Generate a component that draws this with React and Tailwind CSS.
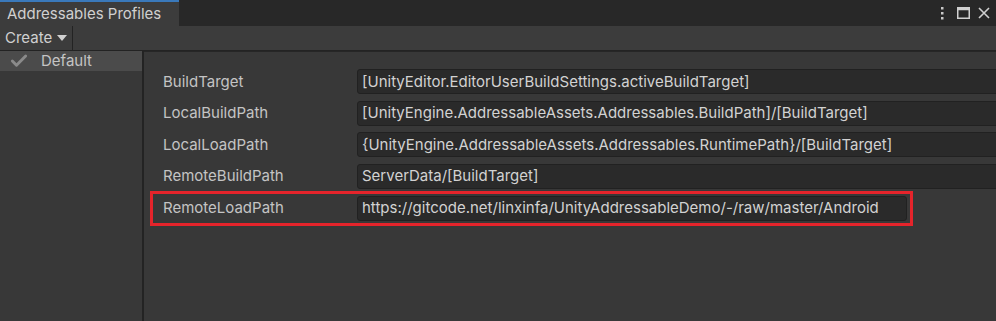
import { Check } from 'lucide-react';

const rows = [
  { label: 'BuildTarget', value: '[UnityEditor.EditorUserBuildSettings.activeBuildTarget]' },
  { label: 'LocalBuildPath', value: '[UnityEngine.AddressableAssets.Addressables.BuildPath]/[BuildTarget]' },
  { label: 'LocalLoadPath', value: '{UnityEngine.AddressableAssets.Addressables.RuntimePath}/[BuildTarget]' },
  { label: 'RemoteBuildPath', value: 'ServerData/[BuildTarget]' },
];

const Field = ({ label, value, className = '' }) => (
  <div className="flex items-center h-[31.5px]">
    <div className="w-[194px] shrink-0 text-[15px] text-[#c4c4c4]">{label}</div>
    <div className={`h-[25px] flex items-center px-[4px] bg-[#2a2a2a] border border-[#212121] rounded-[3px] text-[15px] text-[#d2d2d2] whitespace-nowrap overflow-hidden ${className}`}>
      {value}
    </div>
  </div>
);

export default function App() {
  return (
    <div className="w-[996px] h-[321px] bg-[#383838] flex flex-col overflow-hidden" style={{ fontFamily: 'Inter, "Noto Sans", sans-serif' }}>
      {/* Tab bar */}
      <div className="h-[26px] bg-[#282828] flex items-end justify-between shrink-0">
        <div className="h-[26px] w-[179px] bg-[#3c3c3c] border-t-2 border-[#3a79bb] flex items-center pl-[7px] text-[15px] text-[#d0d0d0]">
          Addressables Profiles
        </div>
        <div className="h-full flex items-center gap-[8px] pr-[6px]">
          <svg width="6" height="14" viewBox="0 0 6 14" className="mr-[4px]">
            <rect x="2" y="1" width="2.5" height="2.5" fill="#c8c8c8" />
            <rect x="2" y="6" width="2.5" height="2.5" fill="#c8c8c8" />
            <rect x="2" y="11" width="2.5" height="2.5" fill="#c8c8c8" />
          </svg>
          <svg width="13" height="12" viewBox="0 0 13 12">
            <rect x="0.75" y="0.75" width="11.5" height="10.5" fill="none" stroke="#d0d0d0" strokeWidth="1.5" />
            <rect x="0.75" y="0.75" width="11.5" height="2.5" fill="#d0d0d0" />
          </svg>
          <svg width="12" height="12" viewBox="0 0 12 12">
            <path d="M1 1 L11 11 M11 1 L1 11" stroke="#d0d0d0" strokeWidth="1.6" />
          </svg>
        </div>
      </div>

      {/* Toolbar */}
      <div className="h-[25px] bg-[#3c3c3c] border-b border-[#232323] flex shrink-0">
        <div className="w-[73px] h-full border-r border-[#232323] flex items-center pl-[5px] gap-[5px] text-[15px] text-[#d0d0d0]">
          Create
          <svg width="10" height="6" viewBox="0 0 10 6">
            <path d="M0 0 L10 0 L5 6 Z" fill="#d0d0d0" />
          </svg>
        </div>
      </div>

      {/* Body */}
      <div className="flex flex-1">
        <div className="w-[142px] shrink-0">
          <div className="h-[20px] bg-[#4b4b4b] flex items-center pl-[9px] text-[15px] text-[#c4c4c4]">
            <Check size={20} strokeWidth={3.5} className="text-[#8a8a8a] mr-[12px]" />
            Default
          </div>
        </div>
        <div className="w-[2px] bg-[#232323] shrink-0" />
        <div className="flex-1 border-t border-[#262626] pt-[14px] pl-[19px]">
          {rows.map((r) => (
            <Field key={r.label} label={r.label} value={r.value} className="w-[640px] rounded-r-none" />
          ))}
          <div className="ml-[-13px] mt-[-1px] w-[763px] h-[35px] border-[3px] border-[#e5242b] flex items-center pl-[10px]">
            <div className="flex items-center">
              <div className="w-[194px] shrink-0 text-[15px] text-[#c4c4c4]">RemoteLoadPath</div>
              <div className="w-[550px] h-[25px] flex items-center px-[4px] bg-[#2a2a2a] border border-[#212121] rounded-[3px] text-[15px] text-[#d2d2d2] whitespace-nowrap">
                https://gitcode.net/linxinfa/UnityAddressableDemo/-/raw/master/Android
              </div>
            </div>
          </div>
        </div>
      </div>
    </div>
  );
}
